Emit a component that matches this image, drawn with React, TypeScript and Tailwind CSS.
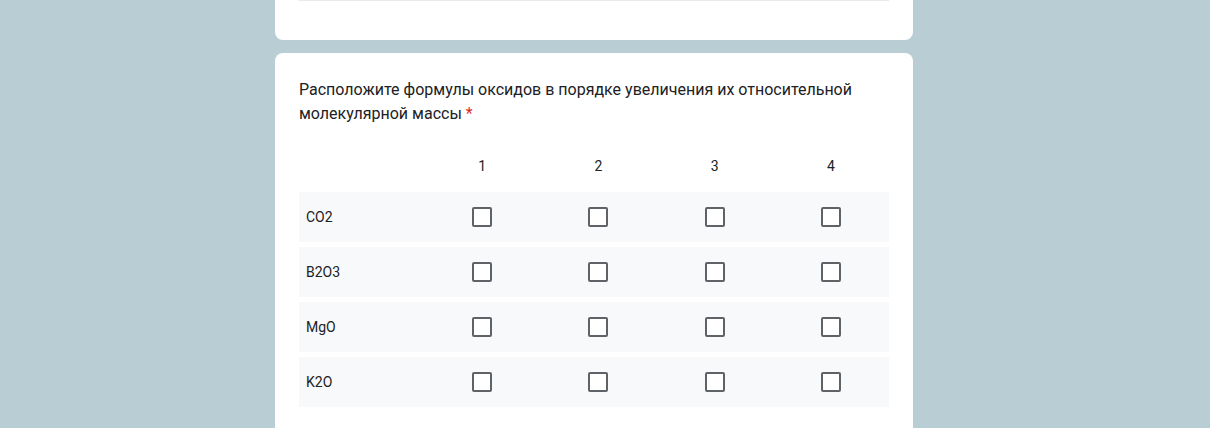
const columns = ['1', '2', '3', '4'];
const rows = ['CO2', 'B2O3', 'MgO', 'K2O'];

function Checkbox() {
  return (
    <div className="w-5 h-5 rounded-[2px] border-2 border-[#5f6368] bg-white" />
  );
}

export default function App() {
  return (
    <div
      className="min-h-[428px] bg-[#b9cdd4] text-[#202124]"
      style={{ fontFamily: 'Roboto, "Noto Sans", Arial, sans-serif' }}
    >
      <div className="ml-[275px] w-[638px]">
        {/* tail of the previous question card */}
        <div className="h-[40px] bg-white rounded-b-lg px-6">
          <div className="h-px bg-[#e8eaed]" />
        </div>

        <div className="mt-[13px] bg-white rounded-t-lg p-6 pb-10">
          <div className="text-base leading-6 pt-px">
            Расположите формулы оксидов в порядке увеличения их относительной
            молекулярной массы
            {' '}
            <span className="text-[#d93025]">*</span>
          </div>

          <div className="mt-[26px] mb-[14px] h-[26px] grid grid-cols-[125px_repeat(4,1fr)] items-center text-sm pt-px">
            <div />
            {columns.map(col => (
              <div key={col} className="text-center">{col}</div>
            ))}
          </div>

          <div className="flex flex-col gap-[5px]">
            {rows.map(row => (
              <div
                key={row}
                className="h-[50px] bg-[#f8f9fa] grid grid-cols-[125px_repeat(4,1fr)] items-center text-sm"
              >
                <div className="pl-[7px]">{row}</div>
                {columns.map(col => (
                  <div key={col} className="flex justify-center">
                    <Checkbox />
                  </div>
                ))}
              </div>
            ))}
          </div>
        </div>
      </div>
    </div>
  );
}
